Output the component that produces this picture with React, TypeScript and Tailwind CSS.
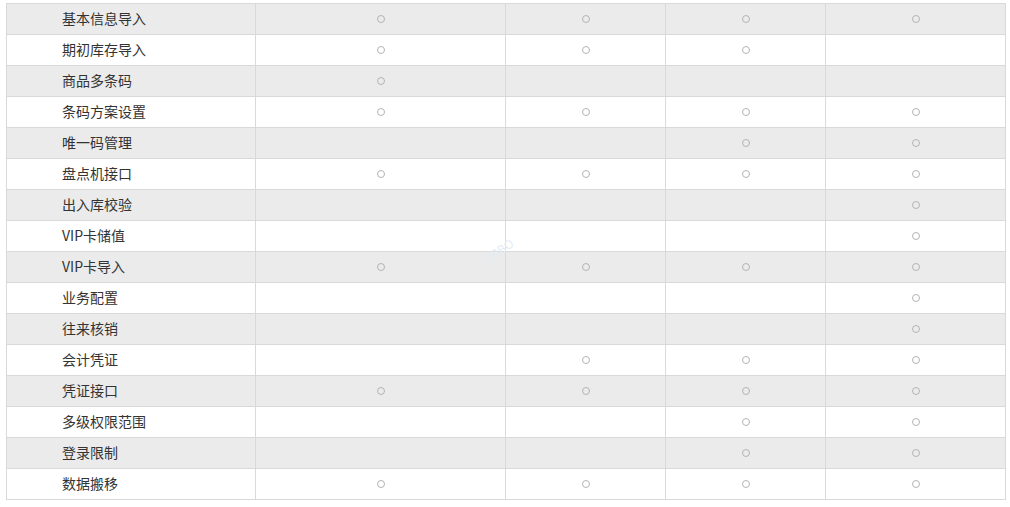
import React from "react";

const rows: [string, boolean[]][] = [
  ["基本信息导入", [true, true, true, true]],
  ["期初库存导入", [true, true, true, false]],
  ["商品多条码", [true, false, false, false]],
  ["条码方案设置", [true, true, true, true]],
  ["唯一码管理", [false, false, true, true]],
  ["盘点机接口", [true, true, true, true]],
  ["出入库校验", [false, false, false, true]],
  ["VIP卡储值", [false, false, false, true]],
  ["VIP卡导入", [true, true, true, true]],
  ["业务配置", [false, false, false, true]],
  ["往来核销", [false, false, false, true]],
  ["会计凭证", [false, true, true, true]],
  ["凭证接口", [true, true, true, true]],
  ["多级权限范围", [false, false, true, true]],
  ["登录限制", [false, false, true, true]],
  ["数据搬移", [true, true, true, true]],
];

const widths = ["w-[250px]", "w-[160px]", "w-[160px]", "w-[180px]"];

function Dot() {
  return <span className="block w-[8px] h-[8px] rounded-full border border-[#b4b4b4]" />;
}

export default function App() {
  return (
    <div
      className="relative w-[1010px] h-[507px] bg-white overflow-hidden"
      style={{ fontFamily: '"Microsoft YaHei", "Noto Sans CJK SC", "Noto Sans", sans-serif' }}
    >
      <div className="ml-[6px] mt-[3px] w-[1000px] border-l border-t border-[#d9d9d9]">
        {rows.map(([name, cols], i) => (
          <div
            key={name}
            className={`flex h-[31px] border-b border-[#d9d9d9] ${i % 2 === 0 ? "bg-[#ebebeb]" : "bg-white"}`}
          >
            <div className="w-[249px] border-r border-[#d9d9d9] flex items-center pl-[55px] pb-[2px] text-[14px] text-[#333] leading-none">
              {name}
            </div>
            {cols.map((c, j) => (
              <div
                key={j}
                className={`${widths[j]} border-r border-[#d9d9d9] flex items-center justify-center`}
              >
                {c ? <Dot /> : null}
              </div>
            ))}
          </div>
        ))}
      </div>
      <div className="absolute left-[482px] top-[242px] -rotate-[35deg] text-[12px] text-[#e4ecf4] pointer-events-none select-none">
        DBBO
      </div>
    </div>
  );
}
